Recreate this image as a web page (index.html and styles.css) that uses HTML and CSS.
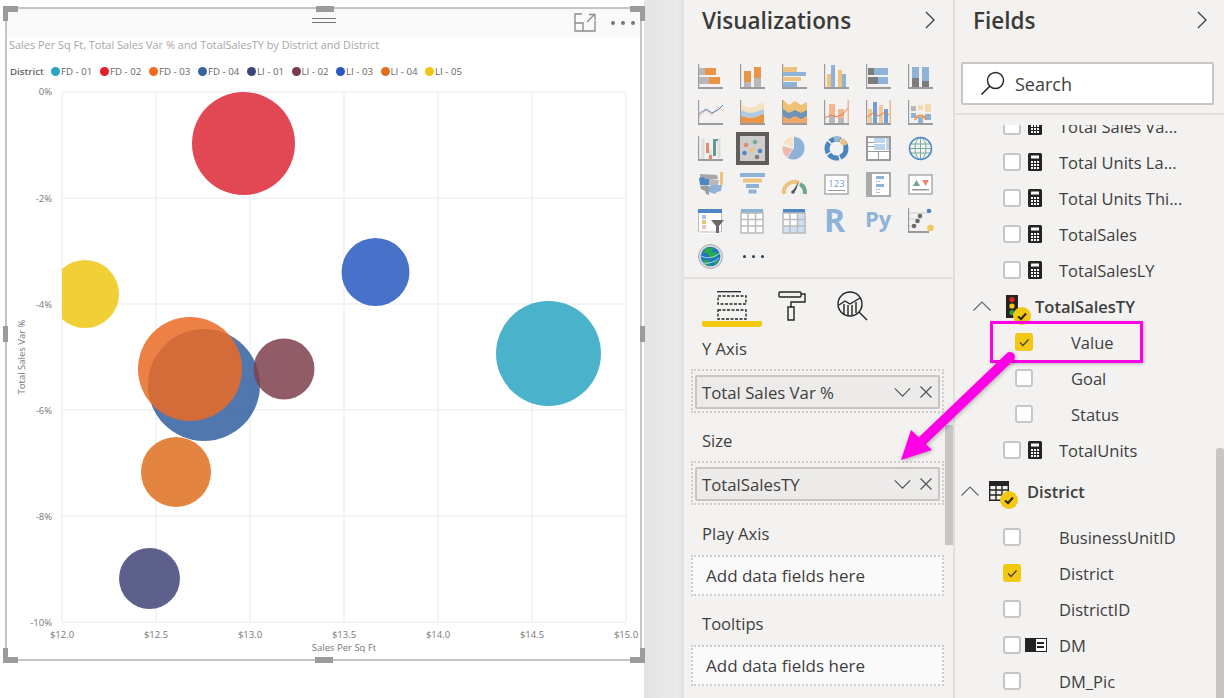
FILE: index.html
```html
<!DOCTYPE html>
<html lang="en">
<head>
    <meta charset="UTF-8">
    <title>Power BI report</title>
    <link rel="stylesheet" href="styles.css">
</head>
<body>
    <svg class="defs">
        <symbol id="calc" viewBox="0 0 14 18">
            <rect width="14" height="18" rx="1.5" fill="#252423"/>
            <rect x="3" y="2.5" width="8" height="3" fill="#fff"/>
            <path d="M3 8h2v2H3zM6 8h2v2H6zM9 8h2v2H9zM3 11h2v2H3zM6 11h2v2H6zM9 11h2v2H9zM3 14h2v2H3zM6 14h2v2H6zM9 14h2v2H9z" fill="#fff"/>
        </symbol>
        <symbol id="tick" viewBox="0 0 18 18">
            <path d="M5 9.5l3 3 5.5-6" fill="none" stroke="#4a4430" stroke-width="1.4"/>
        </symbol>
        <symbol id="badge" viewBox="0 0 18 18">
            <circle cx="9" cy="9" r="9" fill="#f2c811"/>
            <path d="M5 9.5l3 2.5 5-5.5" fill="none" stroke="#252423" stroke-width="2"/>
        </symbol>
        <symbol id="chev-up" viewBox="0 0 18 10">
            <path d="M.5 9.5L9 1l8.5 8.5" fill="none" stroke="#666" stroke-width="1.2"/>
        </symbol>
        <symbol id="chev-down" viewBox="0 0 18 10">
            <path d="M.5 .5L9 9l8.5-8.5" fill="none" stroke="#555" stroke-width="1.3"/>
        </symbol>
        <symbol id="cross" viewBox="0 0 12 12">
            <path d="M.5 .5l11 11M11.5 .5l-11 11" fill="none" stroke="#555" stroke-width="1.3"/>
        </symbol>
        <symbol id="chev-right" viewBox="0 0 10 18">
            <path d="M1 1l8 8-8 8" fill="none" stroke="#444" stroke-width="1.4"/>
        </symbol>
        <symbol id="axes" viewBox="0 0 25 25">
            <path d="M0 0h1.2v23H25v2H0z" fill="#9c9c9c"/>
        </symbol>
    </svg>

    <main class="report">
        <section class="visual">
            <div class="visual-head">
                <span class="grip"></span>
                <svg class="focus-icon" width="22" height="19" viewBox="0 0 22 19">
                    <path d="M8 1H1v17h20V8M1 10h8v8M13 9l7-7M15 1.500h6v6" fill="none" stroke="#8a8a8a" stroke-width="1.300"/>
                </svg>
                <span class="more-dots"><i></i><i></i><i></i></span>
            </div>
            <div class="chart-title">Sales Per Sq Ft, Total Sales Var % and TotalSalesTY by District and District</div>
            <div class="legend">
                <b>District</b>
                <span class="legend-item"><i class="dot c-teal"></i>FD - 01</span>
                <span class="legend-item"><i class="dot c-red"></i>FD - 02</span>
                <span class="legend-item"><i class="dot c-orange"></i>FD - 03</span>
                <span class="legend-item"><i class="dot c-steel"></i>FD - 04</span>
                <span class="legend-item short"><i class="dot c-navy"></i>LI - 01</span>
                <span class="legend-item short"><i class="dot c-maroon"></i>LI - 02</span>
                <span class="legend-item short"><i class="dot c-blue"></i>LI - 03</span>
                <span class="legend-item short"><i class="dot c-rust"></i>LI - 04</span>
                <span class="legend-item short"><i class="dot c-yellow"></i>LI - 05</span>
            </div>

            <svg class="chart" width="633" height="575" viewBox="7 84 633 575">
                <defs>
                    <clipPath id="plot"><rect x="62" y="92" width="565" height="531"/></clipPath>
                </defs>
                <path class="grid" d="M62 92V622M156 92V622M250 92V622M344 92V622M438 92V622M532 92V622M626 92V622M62 92H626M62 198H626M62 304H626M62 410H626M62 516H626M62 622H626"/>
                <g clip-path="url(#plot)">
                    <circle class="bubble f-steel" cx="204" cy="385" r="56"/>
                    <circle class="bubble f-teal" cx="548.500" cy="353.500" r="52.500"/>
                    <circle class="bubble f-red" cx="243.500" cy="143.500" r="51.500"/>
                    <circle class="bubble f-orange" cx="190" cy="369" r="52"/>
                    <circle class="bubble f-navy" cx="149.500" cy="578.500" r="30.500"/>
                    <circle class="bubble f-maroon" cx="284" cy="369" r="30.500"/>
                    <circle class="bubble f-blue" cx="375.500" cy="272" r="34"/>
                    <circle class="bubble f-rust" cx="176" cy="472" r="35"/>
                    <circle class="bubble f-yellow" cx="85" cy="294" r="34"/>
                </g>
                <g class="y-labels">
                    <text x="52" y="95">0%</text>
                    <text x="52" y="202">-2%</text>
                    <text x="52" y="308">-4%</text>
                    <text x="52" y="414">-6%</text>
                    <text x="52" y="520">-8%</text>
                    <text x="52" y="626">-10%</text>
                </g>
                <g class="x-labels">
                    <text x="62" y="638">$12.0</text>
                    <text x="156" y="638">$12.5</text>
                    <text x="250" y="638">$13.0</text>
                    <text x="344" y="638">$13.5</text>
                    <text x="438" y="638">$14.0</text>
                    <text x="532" y="638">$14.5</text>
                    <text x="626" y="638">$15.0</text>
                    <text x="344" y="651">Sales Per Sq Ft</text>
                </g>
                <text class="y-title" transform="translate(25 357) rotate(-90)">Total Sales Var %</text>
            </svg>

            <span class="handle corner tl"></span>
            <span class="handle corner tr"></span>
            <span class="handle corner bl"></span>
            <span class="handle corner br"></span>
            <span class="handle edge-top"></span>
            <span class="handle edge-bottom"></span>
            <span class="handle edge-left"></span>
            <span class="handle edge-right"></span>
        </section>
    </main>

    <div class="gutter"></div>

    <aside class="pane viz-pane">
        <header class="pane-head">
            <h2>Visualizations</h2>
            <svg class="head-chev" width="10" height="18"><use href="#chev-right"/></svg>
        </header>

        <div class="viz-grid">
            <svg class="vi" viewBox="0 0 25 25"><use href="#axes" width="25" height="25"/><path d="M1 4h6v7H1zM1 13h10v7H1z" fill="#b8b8b8"/><path d="M7 4h11v7H7zM11 13h11v7H11z" fill="#ea9447"/></svg>
            <svg class="vi" viewBox="0 0 25 25"><use href="#axes" width="25" height="25"/><path d="M4 7h7v11H4zM14 3h7v11h-7z" fill="#ea9447"/><path d="M4 18h7v5H4zM14 14h7v9h-7z" fill="#b8b8b8"/></svg>
            <svg class="vi" viewBox="0 0 25 25"><use href="#axes" width="25" height="25"/><path d="M1 3h14v5H1zM1 13h18v4H1z" fill="#eec27f"/><path d="M1 8h23v4H1zM1 18h14v5H1z" fill="#8fb2d9"/></svg>
            <svg class="vi" viewBox="0 0 25 25"><use href="#axes" width="25" height="25"/><path d="M3 10h4v13H3zM14 6h4v17h-4z" fill="#eec27f"/><path d="M7 1h4v22H7zM18 10h4v13h-4z" fill="#8fb2d9"/></svg>
            <svg class="vi" viewBox="0 0 25 25"><use href="#axes" width="25" height="25"/><path d="M2 4h6v7H2zM2 13h10v7H2z" fill="#7d7d7d"/><path d="M8 4h14v7H8zM12 13h10v7H12z" fill="#8fb2d9"/></svg>
            <svg class="vi" viewBox="0 0 25 25"><use href="#axes" width="25" height="25"/><path d="M4 3h7v11H4zM14 3h7v14h-7z" fill="#8fb2d9"/><path d="M4 14h7v9H4zM14 17h7v6h-7z" fill="#7d7d7d"/></svg>

            <svg class="vi" viewBox="0 0 25 25"><use href="#axes" width="25" height="25"/><path d="M1 17l7-7 6 5 6-8 5 4" fill="none" stroke="#eeb9a6" stroke-width="1"/><path d="M1 14l7-5 6 4 6-3 5-5" fill="none" stroke="#4f86c4" stroke-width="1"/></svg>
            <svg class="vi" viewBox="0 0 25 25"><use href="#axes" width="25" height="25"/><path d="M1 4l8 4 7-2 8-4v10l-8 2-7 1-8-1z" fill="#f4e2c2"/><path d="M1 10l8 3 7-1 8-3v6l-8 2-7 1-8-2z" fill="#b2cbe4"/><path d="M1 16l8 2 7-1 8-3v9H1z" fill="#ea9447"/></svg>
            <svg class="vi" viewBox="0 0 25 25"><use href="#axes" width="25" height="25"/><path d="M1 0l6 5 6-4 6 4 6-3v11l-6 3-6-3-6 3-6-4z" fill="#f0c178"/><path d="M1 9l6 4 6-3 6 3 6-3v7l-6 3-6-3-6 4-6-3z" fill="#6f93b8"/><path d="M1 16l6 3 6-3 6 3 6-3v7H1z" fill="#f0a868"/></svg>
            <svg class="vi" viewBox="0 0 25 25"><use href="#axes" width="25" height="25"/><path d="M5 16h6v7H5zM14 18h6v5h-6z" fill="#b8b8b8"/><path d="M5 4h6v12H5zM14 9h6v9h-6z" fill="#f2b78d"/><path d="M1 18l6-3 6 2 6-3 5-6" fill="none" stroke="#e07a50" stroke-width="1"/><path d="M23.500 0H25v23h-1.500z" fill="#f2b78d"/></svg>
            <svg class="vi" viewBox="0 0 25 25"><use href="#axes" width="25" height="25"/><path d="M2 9h4v14H2zM13 5h4v18h-4z" fill="#f0c997"/><path d="M7 2h4v21H7zM18 9h4v14h-4z" fill="#6f9fd6"/><path d="M1 17l6-4 6 3 6-4 4 3" fill="none" stroke="#e07a50" stroke-width="1"/><path d="M23.500 0H25v23h-1.500z" fill="#f2b78d"/></svg>
            <svg class="vi" viewBox="0 0 25 25"><use href="#axes" width="25" height="25"/><path d="M3 6h5v5H3zM10 5h5v5h-5zM17 4h6v8h-6z" fill="#f4dab1"/><path d="M3 13h5v5H3zM17 14h6v6h-6zM10 17h5v6h-5z" fill="#8fb2d9"/><path d="M7 20c2-6 9-6 11 0" fill="none" stroke="#ea9447" stroke-width="2"/><path d="M3 6h5v5H3z" fill="#b8b8b8"/></svg>

            <svg class="vi" viewBox="0 0 25 25"><use href="#axes" width="25" height="25"/><path d="M5 3v20M12 14v9M21 2v20" stroke="#ddd" stroke-width="3"/><path d="M8 7h3v12h3v4h-3v-6H8z" fill="#e88870"/><path d="M15 3h5v2h-2v15h-3z" fill="#5d9c8f"/></svg>
            <span class="vi-active"><svg width="25" height="25" viewBox="0 0 25 25"><circle cx="6" cy="9" r="2.300" fill="#e08a70"/><circle cx="15" cy="6" r="2.300" fill="#77ad9b"/><circle cx="4.500" cy="17" r="2.300" fill="#4f86c4"/><circle cx="12" cy="14" r="2.300" fill="#eec27f"/><circle cx="20" cy="15" r="2.300" fill="#4f86c4"/><circle cx="17" cy="21" r="2.300" fill="#7d7d7d"/></svg></span>
            <svg class="vi" viewBox="0 0 25 25"><path d="M12 12V.5a11.500 11.500 0 1 1-6.500 21.500z" fill="#8fb2d9"/><path d="M11 13l-6 8.500A11 11 0 0 1 .8 10z" fill="#f0b8a8"/><path d="M11 11L1.500 8A11 11 0 0 1 11 .5z" fill="#f4e2c2"/></svg>
            <svg class="vi" viewBox="0 0 25 25"><circle cx="12.500" cy="12.500" r="9.500" fill="none" stroke="#4a86c0" stroke-width="5" stroke-dasharray="11 1.500"/><path d="M10 3.200a9.500 9.500 0 0 1 6-.1" fill="none" stroke="#9db8d4" stroke-width="5"/><path d="M17 4a9.500 9.500 0 0 1 4.500 5" fill="none" stroke="#eec27f" stroke-width="5"/></svg>
            <svg class="vi" viewBox="0 0 25 25"><rect x="1" y="1" width="23" height="23" fill="#fff" stroke="#999" stroke-width="2"/><path d="M8 2h11v5H8zM8 8h11v6H8zM20 2h3v12h-3z" fill="#bfd4ea"/><path d="M2 6h6v1H2zM2 10h6v1H2zM1 15h23v1H1zM12 15h1v9h-1z" fill="#999"/></svg>
            <svg class="vi" viewBox="0 0 25 25"><ellipse cx="12.500" cy="12.500" rx="5.500" ry="11" fill="none" stroke="#77ad9b"/><path d="M2 8h21M2 17h21M1 12.500h23M12.500 1v23" stroke="#77ad9b"/><circle cx="12.500" cy="12.500" r="11" fill="none" stroke="#4f86c4" stroke-width="1.500"/></svg>

            <svg class="vi" viewBox="0 0 25 25"><path d="M2 2l17 1 1 4-9 1-2 6-7-1z" fill="#a8a8a8"/><path d="M1 6l5-1 1 2h4v6H2z" fill="#4f86c4"/><path d="M11 8h10l-1 5h-9z" fill="#b8b8b8"/><path d="M22 0h3v9l-1 6h-2z" fill="#f0c178"/><path d="M2 14h9v9l-3-1-1-3-4-2z" fill="#9c9c9c"/><path d="M11 15l2-2 11 0-1 6-4 1-2 2-6-2z" fill="#8fb2d9"/></svg>
            <svg class="vi" viewBox="0 0 25 25"><path d="M0 1h25v4H0z" fill="#8fb2d9"/><path d="M3 6.500h19v4H3z" fill="#eec27f"/><path d="M6 12h13v4H6z" fill="#8fb2d9"/><path d="M8.500 17.500h8v4h-8z" fill="#8fb2d9"/></svg>
            <svg class="vi" viewBox="0 0 25 25"><path d="M2 22a10.500 10.500 0 0 1 15-11" fill="none" stroke="#eec27f" stroke-width="4"/><path d="M18 12a10.500 10.500 0 0 1 5 10" fill="none" stroke="#6fa58f" stroke-width="4"/><path d="M17 9l-5 8-2 3 1 1 3-3z" fill="#555"/><circle cx="11" cy="20" r="1.800" fill="#555"/></svg>
            <svg class="vi" viewBox="0 0 25 25"><rect x="1" y="3" width="23" height="19" fill="#fff" stroke="#aaa" stroke-width="1.500"/><text class="vi-num" x="12.500" y="15">123</text><path d="M4 18h17v1H4z" fill="#999"/></svg>
            <svg class="vi" viewBox="0 0 25 25"><rect x="1" y="1" width="23" height="23" fill="#fff" stroke="#aaa" stroke-width="2"/><path d="M2 2h4v21H2z" fill="#aaa"/><path d="M10 4h8v3h-8zM10 12h8v3h-8z" fill="#8fb2d9"/><path d="M10 9h4v1h-4zM10 17h4v1h-4zM10 20h4v1h-4z" fill="#bbb"/></svg>
            <svg class="vi" viewBox="0 0 25 25"><rect x="1" y="3" width="23" height="19" fill="#fff" stroke="#aaa" stroke-width="1.500"/><path d="M5 14l3.500-6 3.500 6z" fill="#6fa58f"/><path d="M14 8h7l-3.500 6z" fill="#e88870"/><path d="M4 17h17v1.500H4z" fill="#999"/></svg>

            <svg class="vi" viewBox="0 0 25 25"><path d="M0 1h24v25H0z" fill="#fff"/><path d="M.5 1.500h23V24H.5z" fill="none" stroke="#bbb"/><path d="M0 1h24v4H0z" fill="#4f86c4"/><path d="M4 7h4v4H4z" fill="#a8c4e4"/><path d="M4 12h4v4H4z" fill="#f0c178"/><path d="M4 17h4v4H4z" fill="#f2c4b8"/><path d="M13 12h13l-5 6v7h-3v-7z" fill="#6b6b6b"/></svg>
            <svg class="vi" viewBox="0 0 25 25"><path d="M1 1h22v24H1z" fill="#fff"/><path d="M1 1h22v4H1z" fill="#8fb2d9"/><path d="M1 5h22v20H1zM8 5v20M15.500 5v20M1 11.500h22M1 18h22" fill="none" stroke="#bbb" stroke-width="1.500"/></svg>
            <svg class="vi" viewBox="0 0 25 25"><path d="M1 1h22v24H1z" fill="#fff"/><path d="M1 18h22v7H1zM15.500 5H23v20h-7.500z" fill="#cfe0f0"/><path d="M1 1h22v4H1z" fill="#4f86c4"/><path d="M1 5h22v20H1zM8 5v20M15.500 5v20M1 11.500h22M1 18h22" fill="none" stroke="#bbb" stroke-width="1.500"/></svg>
            <svg class="vi" viewBox="0 0 25 25"><text class="vi-r" x="0" y="24">R</text></svg>
            <svg class="vi" viewBox="0 0 25 25"><text class="vi-py" x="-1" y="19">Py</text></svg>
            <svg class="vi vi-wide" viewBox="0 0 26 25"><path d="M0 0h1.200v23H21v2H0z" fill="#999"/><path d="M1 5h18M1 11h12M1 18h8" stroke="#ccc"/><circle cx="21" cy="3" r="2.300" fill="#4f86c4"/><circle cx="12" cy="8" r="2.300" fill="#6b6b6b"/><circle cx="9.500" cy="13" r="2.300" fill="#6b6b6b"/><circle cx="6" cy="18" r="2.300" fill="#6b6b6b"/><circle cx="22.500" cy="20" r="3.300" fill="#f0c860"/></svg>

            <svg class="vi" viewBox="0 0 25 25"><circle cx="12.500" cy="12.500" r="12" fill="#ddd" stroke="#aaa"/><circle cx="12.500" cy="12.500" r="9.800" fill="#1f78c1"/><path d="M9 3l6 1-1 4 6 1-2 5-6-1-3-4-4 0zM5 15l6 2 2 5-5-1zM15 17l5-1-2 5z" fill="#2aa84a"/><path d="M3 12c6 3 12 2 19-3M5 19c5 1 12-1 16-5" fill="none" stroke="#cfe6f5" stroke-width=".8"/></svg>
            <span class="vi-more"><i></i><i></i><i></i></span>
        </div>

        <div class="tabs">
            <div class="tab active">
                <svg width="30" height="30" viewBox="0 0 30 30"><path d="M0 .7h24" stroke="#252423" stroke-width="1.300"/><path d="M1 5h28v8H1zM1 19h28v9H1z" fill="none" stroke="#252423" stroke-width="1.300" stroke-dasharray="3 1.500"/></svg>
            </div>
            <div class="tab">
                <svg width="30" height="30" viewBox="0 0 30 30"><path d="M3 1h20c1 0 1 .5 1 1v3c0 1-.5 1-1 1H3c-1 0-1-.5-1-1V2c0-.5 0-1 1-1zM24 3h4v8H14v5M11 16h6v13h-6z" fill="none" stroke="#252423" stroke-width="1.400"/></svg>
            </div>
            <div class="tab">
                <svg width="31" height="30" viewBox="0 0 31 30"><circle cx="13" cy="13" r="12" fill="none" stroke="#252423" stroke-width="1.400"/><path d="M22 21l8 8M2 14l6-4 5 3 10-6" fill="none" stroke="#252423" stroke-width="1.400"/><path d="M7 13v10M11 14v10M15 14v10M19 11v11" stroke="#252423" stroke-width="1.400"/></svg>
            </div>
        </div>

        <div class="wells">
            <div class="well-label">Y Axis</div>
            <div class="well filled">
                <div class="pill">Total Sales Var %
                    <svg class="pill-chev" width="17" height="9"><use href="#chev-down"/></svg>
                    <svg class="pill-x" width="12" height="12"><use href="#cross"/></svg>
                </div>
            </div>
            <div class="well-label">Size</div>
            <div class="well filled last">
                <div class="pill">TotalSalesTY
                    <svg class="pill-chev" width="17" height="9"><use href="#chev-down"/></svg>
                    <svg class="pill-x" width="12" height="12"><use href="#cross"/></svg>
                </div>
            </div>
            <div class="well-label">Play Axis</div>
            <div class="well empty">Add data fields here</div>
            <div class="well-label">Tooltips</div>
            <div class="well empty">Add data fields here</div>
        </div>
        <span class="scrollbar viz-scroll"></span>
    </aside>

    <aside class="pane fields-pane">
        <header class="pane-head">
            <h2>Fields</h2>
            <svg class="head-chev" width="10" height="18"><use href="#chev-right"/></svg>
        </header>
        <div class="search">
            <svg width="25" height="25" viewBox="0 0 25 25"><circle cx="15.500" cy="9.500" r="8" fill="none" stroke="#252423" stroke-width="1.400"/><path d="M10 15L1.500 23.500" stroke="#252423" stroke-width="1.600"/></svg>
            <span>Search</span>
        </div>
        <div class="field-list">
            <div class="field-scroll">
                <div class="row"><i class="check"></i><span class="slot"><svg width="14" height="18"><use href="#calc"/></svg></span>Total Sales Va...</div>
                <div class="row"><i class="check"></i><span class="slot"><svg width="14" height="18"><use href="#calc"/></svg></span>Total Units La...</div>
                <div class="row"><i class="check"></i><span class="slot"><svg width="14" height="18"><use href="#calc"/></svg></span>Total Units Thi...</div>
                <div class="row"><i class="check"></i><span class="slot"><svg width="14" height="18"><use href="#calc"/></svg></span>TotalSales</div>
                <div class="row"><i class="check"></i><span class="slot"><svg width="14" height="18"><use href="#calc"/></svg></span>TotalSalesLY</div>
                <div class="row group kpi">
                    <svg class="group-chev" width="18" height="10"><use href="#chev-up"/></svg>
                    <span class="group-icon">
                        <svg width="12" height="23" viewBox="0 0 12 23"><rect width="12" height="23" fill="#252423"/><circle cx="6" cy="4.500" r="2.600" fill="#e3241b"/><circle cx="6" cy="11" r="2.600" fill="#f2c811"/><circle cx="6" cy="17.500" r="2.600" fill="#2e9e3f"/></svg>
                        <svg class="badge" width="18" height="18"><use href="#badge"/></svg>
                    </span>
                    <b>TotalSalesTY</b>
                </div>
                <div class="row sub"><i class="check on"><svg width="18" height="18"><use href="#tick"/></svg></i><span class="slot"></span>Value</div>
                <div class="row sub"><i class="check"></i><span class="slot"></span>Goal</div>
                <div class="row sub"><i class="check"></i><span class="slot"></span>Status</div>
                <div class="row"><i class="check"></i><span class="slot"><svg width="14" height="18"><use href="#calc"/></svg></span>TotalUnits</div>
                <div class="row group table">
                    <svg class="group-chev" width="18" height="10"><use href="#chev-up"/></svg>
                    <span class="group-icon">
                        <svg width="20" height="20" viewBox="0 0 20 20"><path d="M0 0h20v5H0z" fill="#252423"/><path d="M.7 .7h18.600v18.600H.7zM.7 9h18.600M.7 14h18.600M7 4v15M13 4v15" fill="none" stroke="#252423" stroke-width="1.400"/></svg>
                        <svg class="badge" width="18" height="18"><use href="#badge"/></svg>
                    </span>
                    <b>District</b>
                </div>
                <div class="row"><i class="check"></i><span class="slot"></span>BusinessUnitID</div>
                <div class="row"><i class="check on"><svg width="18" height="18"><use href="#tick"/></svg></i><span class="slot"></span>District</div>
                <div class="row"><i class="check"></i><span class="slot"></span>DistrictID</div>
                <div class="row"><i class="check"></i><span class="slot slot-card"><svg width="22" height="14" viewBox="0 0 22 14"><rect x=".5" y=".5" width="21" height="13" fill="#fff" stroke="#252423"/><path d="M0 0h11v14H0z" fill="#252423"/><path d="M12 4h7v2h-7zM12 8h7v2h-7z" fill="#252423"/></svg></span>DM</div>
                <div class="row"><i class="check"></i><span class="slot"></span>DM_Pic</div>
            </div>
        </div>
        <span class="scrollbar fields-scrollbar"></span>
    </aside>

    <!-- callout drawn on top of the panes -->
    <div class="callout-box"></div>
    <svg class="callout-arrow" width="1224" height="698" viewBox="0 0 1224 698">
        <path d="M1010 357L921 442" stroke="#ff00e6" stroke-width="10" stroke-linecap="round"/>
        <path d="M901 460L911 430L932 450z" fill="#ff00e6"/>
    </svg>
</body>
</html>
```

FILE: styles.css
```css
* {
    box-sizing: border-box;
}
html, body {
    margin: 0;
    height: 698px;
    overflow: hidden;
}
body {
    display: flex;
    position: relative;
    background: #fff;
    font-family: "Open Sans", "Noto Sans", sans-serif;
    color: #3f3e3d;
}
.defs {
    position: absolute;
    width: 0;
    height: 0;
}

/* report canvas */
.report {
    width: 644px;
    flex: none;
    padding: 7px 0 0 5px;
}
.gutter {
    width: 40px;
    flex: none;
    background: linear-gradient(to right, #e3e3e3, #ebebeb 85%, #e1dfdd);
}
.visual {
    position: relative;
    width: 637px;
    height: 654px;
    border: 2px solid #c4c4c4;
    background: #fff;
}
.visual-head {
    position: relative;
    height: 28px;
    background: #f9f9f9;
}
.grip {
    position: absolute;
    left: 305px;
    top: 9px;
    width: 24px;
    height: 5px;
    border-top: 1px solid #777;
    border-bottom: 1px solid #777;
}
.focus-icon {
    position: absolute;
    left: 567px;
    top: 4px;
}
.more-dots {
    position: absolute;
    left: 604px;
    top: 12px;
    display: flex;
    gap: 6px;
}
.more-dots i {
    width: 4px;
    height: 4px;
    border-radius: 50%;
    background: #777;
}
.chart-title {
    height: 16px;
    padding-left: 2px;
    font-size: 10.950px;
    line-height: 16px;
    color: #a6a6a6;
    white-space: nowrap;
}
.legend {
    display: flex;
    align-items: center;
    height: 18px;
    margin: 9px 0 4px;
    padding-left: 3px;
    font-size: 9.700px;
    color: #666;
}
.legend b {
    width: 41px;
    font-weight: 600;
}
.legend-item {
    display: flex;
    align-items: center;
    width: 49px;
    gap: 1px;
    white-space: nowrap;
}
.legend-item.short {
    width: 44.500px;
}
.dot {
    width: 9px;
    height: 9px;
    border-radius: 50%;
    flex: none;
}
.c-teal { background: #2aa5c1; }
.c-red { background: #e01f2b; }
.c-orange { background: #f0691e; }
.c-steel { background: #3a649e; }
.c-navy { background: #3f4477; }
.c-maroon { background: #7b3a4a; }
.c-blue { background: #2858c0; }
.c-rust { background: #de6f1e; }
.c-yellow { background: #edc714; }

.chart {
    display: block;
    font-family: "Open Sans", sans-serif;
}
.grid {
    fill: none;
    stroke: #f1f1f1;
    stroke-width: 1.500;
}
.bubble {
    opacity: 0.85;
}
.f-teal { fill: #2aa5c1; }
.f-red { fill: #dd2835; }
.f-orange { fill: #ea6a25; }
.f-steel { fill: #3160a0; }
.f-navy { fill: #3f4477; }
.f-maroon { fill: #7c3f4d; }
.f-blue { fill: #2858c0; }
.f-rust { fill: #de6f1e; }
.f-yellow { fill: #edc714; }
.y-labels text {
    font-size: 9.500px;
    text-anchor: end;
    fill: #777;
}
.x-labels text {
    font-size: 9.500px;
    text-anchor: middle;
    fill: #777;
}
.y-title {
    font-size: 9.500px;
    text-anchor: middle;
    fill: #777;
}

/* selection handles */
.handle {
    position: absolute;
    background: #9b9b9b;
}
.corner {
    width: 15px;
    height: 15px;
    background: none;
    border: 0 solid #9b9b9b;
}
.tl { left: -4px; top: -3px; border-width: 6px 0 0 5px; }
.tr { right: -5px; top: -3px; border-width: 6px 5px 0 0; }
.bl { left: -4px; bottom: -4px; border-width: 0 0 6px 5px; }
.br { right: -5px; bottom: -4px; border-width: 0 5px 6px 0; }
.edge-top { left: 309px; top: -3px; width: 18px; height: 6px; }
.edge-bottom { left: 308px; bottom: -4px; width: 18px; height: 6px; }
.edge-left { left: -4px; top: 317px; width: 5px; height: 16px; }
.edge-right { right: -5px; top: 317px; width: 5px; height: 16px; }

/* side panes */
.pane {
    position: relative;
    flex: none;
    height: 698px;
    background: #f3f2f1;
    overflow: hidden;
}
.viz-pane {
    width: 271px;
    border-right: 2px solid #e1dfdd;
}
.fields-pane {
    width: 269px;
}
.pane-head {
    display: flex;
    align-items: center;
    justify-content: space-between;
    height: 42px;
    padding: 0 17px 2px 18px;
}
.viz-pane .pane-head {
    padding-right: 18px;
}
.pane-head h2 {
    margin: 0;
    font-size: 22.500px;
    font-weight: 600;
    color: #3b3a39;
}
.viz-grid {
    display: grid;
    grid-template-columns: repeat(6, 42px);
    grid-auto-rows: 36px;
    height: 213px;
    margin-top: 22px;
    padding-left: 14px;
}
.vi {
    width: 25px;
    height: 25px;
    overflow: visible;
}
.vi-wide {
    width: 26px;
}
.vi-active {
    display: flex;
    align-items: center;
    justify-content: center;
    width: 33px;
    height: 33px;
    margin: -4px 0 0 -4px;
    border: 4px solid #605e5c;
    background: #cfcdcb;
}
.vi-more {
    display: flex;
    gap: 6px;
    padding: 11px 0 0 3px;
}
.vi-more i {
    width: 3px;
    height: 3px;
    border-radius: 50%;
    background: #2b3a55;
}
.vi-num {
    font-size: 9.500px;
    text-anchor: middle;
    fill: #6f9fd6;
}
.vi-r {
    font-size: 32px;
    font-weight: 700;
    fill: #8fb2d9;
}
.vi-py {
    font-size: 22px;
    font-weight: 700;
    fill: #8fb2d9;
}

.tabs {
    display: flex;
    height: 56px;
    padding: 12px 0 0 18px;
    border-top: 2px solid #e1dfdd;
}
.tab {
    position: relative;
    display: flex;
    justify-content: center;
    width: 60px;
    height: 36px;
}
.tab.active {
    border-bottom: 6px solid #f2c811;
    border-radius: 0 0 3px 3px;
}
.wells {
    padding-top: 1px;
}
.well-label {
    height: 30px;
    padding-left: 18px;
    font-size: 16.600px;
    line-height: 30px;
}
.well {
    width: 253px;
    margin: 5px 0 13px 7px;
    border: 2px dotted #cfcdcb;
}
.well.last {
    margin-bottom: 14px;
}
.well.filled {
    height: 44px;
    padding: 4px 2px;
}
.well.empty {
    height: 41px;
    margin-top: 6px;
    background: #fbfafa;
    padding-left: 13px;
    font-size: 17px;
    line-height: 37px;
}
.pill {
    display: flex;
    align-items: center;
    height: 34px;
    padding-left: 5px;
    border: 2px solid #c8c6c4;
    border-radius: 2px;
    background: #edebe9;
    font-size: 16.750px;
}
.pill-chev {
    margin-left: auto;
}
.pill-x {
    margin: 0 6px 0 9px;
}
.scrollbar {
    position: absolute;
    width: 9px;
    background: #c8c6c4;
}
.viz-scroll {
    top: 425px;
    left: 261px;
    height: 120px;
}
.fields-scrollbar {
    top: 448px;
    left: 261px;
    bottom: 0;
    width: 8px;
    border-radius: 3px 3px 0 0;
}

/* fields list */
.search {
    display: flex;
    align-items: center;
    gap: 10px;
    width: 253px;
    height: 43px;
    margin: 20px 0 8px 6px;
    padding-left: 17px;
    border: 2px solid #c8c6c4;
    border-radius: 2px;
    background: #fff;
    font-size: 18px;
}
.field-list {
    position: relative;
    height: 590px;
    border-top: 2px solid #e1dfdd;
    overflow: hidden;
}
.field-list::before {
    content: "";
    position: absolute;
    z-index: 1;
    left: 0;
    top: 0;
    right: 0;
    height: 10px;
    background: #f3f2f1;
}
.field-scroll {
    margin-top: -7px;
}
.row {
    display: flex;
    align-items: center;
    height: 36px;
    padding-left: 48px;
    font-size: 16.500px;
    white-space: nowrap;
}
.row.sub {
    padding-left: 60px;
}
.row b {
    font-weight: 600;
}
.check {
    display: block;
    width: 18px;
    height: 18px;
    flex: none;
    border: 2px solid #c8c6c4;
    border-radius: 3px;
    background: #fff;
}
.check svg {
    display: block;
}
.check.on {
    border: 0;
    background: #f2c811;
}
.slot {
    display: flex;
    width: 38px;
    flex: none;
    padding-left: 7px;
}
.slot-card {
    padding-left: 4px;
}
.group-icon {
    position: relative;
    display: flex;
}
.badge {
    position: absolute;
}
.kpi {
    padding-left: 18px;
}
.kpi .group-icon {
    margin: 0 17px 0 15px;
}
.kpi .badge {
    left: 7px;
    top: 12px;
}
.table {
    height: 46px;
    margin-bottom: 5px;
    padding-left: 6px;
}
.table .group-icon {
    margin: 0 18px 0 10px;
}
.table .badge {
    left: 11px;
    top: 10px;
}

/* magenta annotation */
.callout-box {
    position: absolute;
    left: 990px;
    top: 321px;
    width: 153px;
    height: 42px;
    border: 3px solid #ff00e6;
    box-shadow: 1px 1px 3px rgba(0, 0, 0, 0.25);
}
.callout-arrow {
    position: absolute;
    left: 0;
    top: 0;
    pointer-events: none;
    filter: drop-shadow(1px 1px 2px rgba(0, 0, 0, 0.3));
}
```
